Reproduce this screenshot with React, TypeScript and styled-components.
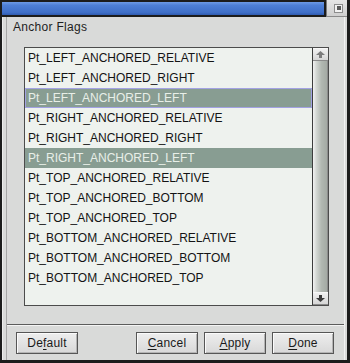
import React from "react";
import styled, { createGlobalStyle } from "styled-components";

const GlobalStyle = createGlobalStyle`
  html, body { margin: 0; padding: 0; background: #d9dad9; }
  body { font-family: "Liberation Sans", Arial, sans-serif; }
  * { box-sizing: border-box; }
`;

const Window = styled.div`
  position: relative;
  width: 350px;
  height: 363px;
  display: flex;
  flex-direction: column;
  background: #d9dad9;
  border-left: 2px solid #1c1c1c;
  border-right: 3px solid #1c1c1c;
  border-bottom: 3px solid #1c1c1c;
  overflow: hidden;
`;

const TitleRow = styled.div`
  display: flex;
  height: 17px;
  margin-left: -2px;
  margin-right: -3px;
  background: #1c1c1c;
`;

const TitleBar = styled.div`
  flex: 1;
  margin: 2px 2px 2px 2px;
  background: linear-gradient(#6e9be6 0%, #4e7fd6 25%, #3f6fc8 80%, #2f5bb0 100%);
`;

const CornerBox = styled.div`
  width: 24px;
  display: flex;
  align-items: center;
  justify-content: center;
  background: linear-gradient(#e6e6e6, #cfcfcf);
  border-left: 1px solid #7a7a7a;
  border-bottom: 1px solid #8a8a8a;
`;

const MinIcon = styled.div`
  width: 9px;
  height: 9px;
  border: 1px solid #8c8c8c;
  background: #f2f2f2;
  display: flex;
  align-items: center;
  justify-content: center;
  &::after {
    content: "";
    width: 4px;
    height: 4px;
    background: #5a5a5a;
  }
`;

const Body = styled.div`
  flex: 1;
  display: flex;
  flex-direction: column;
  padding: 0 2px 0 3px;
  border-left: 1px solid #ececec;
`;

const Panel = styled.div`
  flex: 1;
  display: flex;
  flex-direction: column;
  padding: 3px 0 0 0;
  border-left: 1px solid #a6a6a6;
  border-right: 1px solid #f2f2f2;
`;

const Legend = styled.div`
  height: 14px;
  line-height: 14px;
  font-size: 12px;
  color: #1e1e1e;
  padding-left: 6px;
  letter-spacing: 0.3px;
`;

const ListBox = styled.div`
  margin: 13px 0 0 17px;
  width: 305px;
  height: 259px;
  display: flex;
  border: 1px solid #4c4c4c;
  background: #eef2ee;
`;

const Items = styled.div`
  flex: 1;
  display: flex;
  flex-direction: column;
`;

const Item = styled.div<{ $selected?: boolean; $focused?: boolean }>`
  height: 20px;
  line-height: 18px;
  padding-left: 2px;
  font-size: 12px;
  white-space: nowrap;
  color: ${(p) => (p.$selected ? "#e8efe8" : "#141414")};
  background: ${(p) => (p.$selected ? "#889d92" : "transparent")};
  border: 1px solid ${(p) => (p.$focused ? "#a2a2e2" : p.$selected ? "#889d92" : "transparent")};
`;

const ScrollBar = styled.div`
  width: 16px;
  display: flex;
  flex-direction: column;
  border-left: 1px solid #3c3c3c;
`;

const ArrowButton = styled.div`
  height: 13px;
  display: flex;
  align-items: center;
  justify-content: center;
  background: linear-gradient(#f0f0f0, #d6d6d6);
  border-top: 1px solid #f8f8f8;
  border-bottom: 1px solid #8a8a8a;
`;

const Thumb = styled.div`
  flex: 1;
  background: linear-gradient(to right, #f2f2f2 0%, #d2d6d2 25%, #b2b8b2 60%, #a4aaa4 100%);
  border-right: 1px solid #8c8c8c;
`;

const Separator = styled.div`
  height: 2px;
  border-top: 1px solid #5c5c5c;
  border-bottom: 1px solid #f4f4f4;
  margin-top: 18px;
`;

const ButtonBar = styled.div`
  display: flex;
  align-items: center;
  gap: 6px;
  padding: 5px 10px 6px 9px;
  height: 34px;
`;

const Spacer = styled.div`
  flex: 1;
`;

const Button = styled.div`
  width: 62px;
  height: 22px;
  display: flex;
  align-items: center;
  justify-content: center;
  font-size: 12px;
  color: #1a1a1a;
  border: 1px solid #565656;
  background: linear-gradient(#eeeeee, #d8d8d8);
  box-shadow: inset 1px 1px 0 #fbfbfb, inset -1px -1px 0 #b4b4b4;
  letter-spacing: 0.2px;
`;

const Mn = styled.span`
  text-decoration: underline;
  text-underline-offset: 2px;
`;

const Grip = styled.div`
  position: absolute;
  right: -3px;
  bottom: -3px;
  width: 8px;
  height: 8px;
  border-right: 3px solid #3f6fc8;
  border-bottom: 3px solid #3f6fc8;
`;

const items = [
  "Pt_LEFT_ANCHORED_RELATIVE",
  "Pt_LEFT_ANCHORED_RIGHT",
  "Pt_LEFT_ANCHORED_LEFT",
  "Pt_RIGHT_ANCHORED_RELATIVE",
  "Pt_RIGHT_ANCHORED_RIGHT",
  "Pt_RIGHT_ANCHORED_LEFT",
  "Pt_TOP_ANCHORED_RELATIVE",
  "Pt_TOP_ANCHORED_BOTTOM",
  "Pt_TOP_ANCHORED_TOP",
  "Pt_BOTTOM_ANCHORED_RELATIVE",
  "Pt_BOTTOM_ANCHORED_BOTTOM",
  "Pt_BOTTOM_ANCHORED_TOP",
];

const selected = new Set([2, 5]);

const Arrow = ({ down }: { down?: boolean }) => (
  <svg width="9" height="7" viewBox="0 0 9 7" style={down ? { transform: "rotate(180deg)" } : undefined}>
    <path d="M4.5 0 L9 4 L6 4 L6 7 L3 7 L3 4 L0 4 Z" fill={down ? "#3a3a3a" : "#7c7c7c"} />
  </svg>
);

export default function App() {
  return (
    <>
      <GlobalStyle />
      <Window>
        <TitleRow>
          <TitleBar />
          <CornerBox>
            <MinIcon />
          </CornerBox>
        </TitleRow>
        <Body>
          <Panel>
            <Legend>Anchor Flags</Legend>
            <ListBox>
              <Items>
                {items.map((t, i) => (
                  <Item key={t} $selected={selected.has(i)} $focused={i === 2}>
                    {t}
                  </Item>
                ))}
              </Items>
              <ScrollBar>
                <ArrowButton>
                  <Arrow />
                </ArrowButton>
                <Thumb />
                <ArrowButton>
                  <Arrow down />
                </ArrowButton>
              </ScrollBar>
            </ListBox>
            <Separator />
            <ButtonBar>
              <Button>
                De<Mn>f</Mn>ault
              </Button>
              <Spacer />
              <Button>
                <Mn>C</Mn>ancel
              </Button>
              <Button>
                <Mn>A</Mn>pply
              </Button>
              <Button>
                <Mn>D</Mn>one
              </Button>
            </ButtonBar>
          </Panel>
        </Body>
        <Grip />
      </Window>
    </>
  );
}
